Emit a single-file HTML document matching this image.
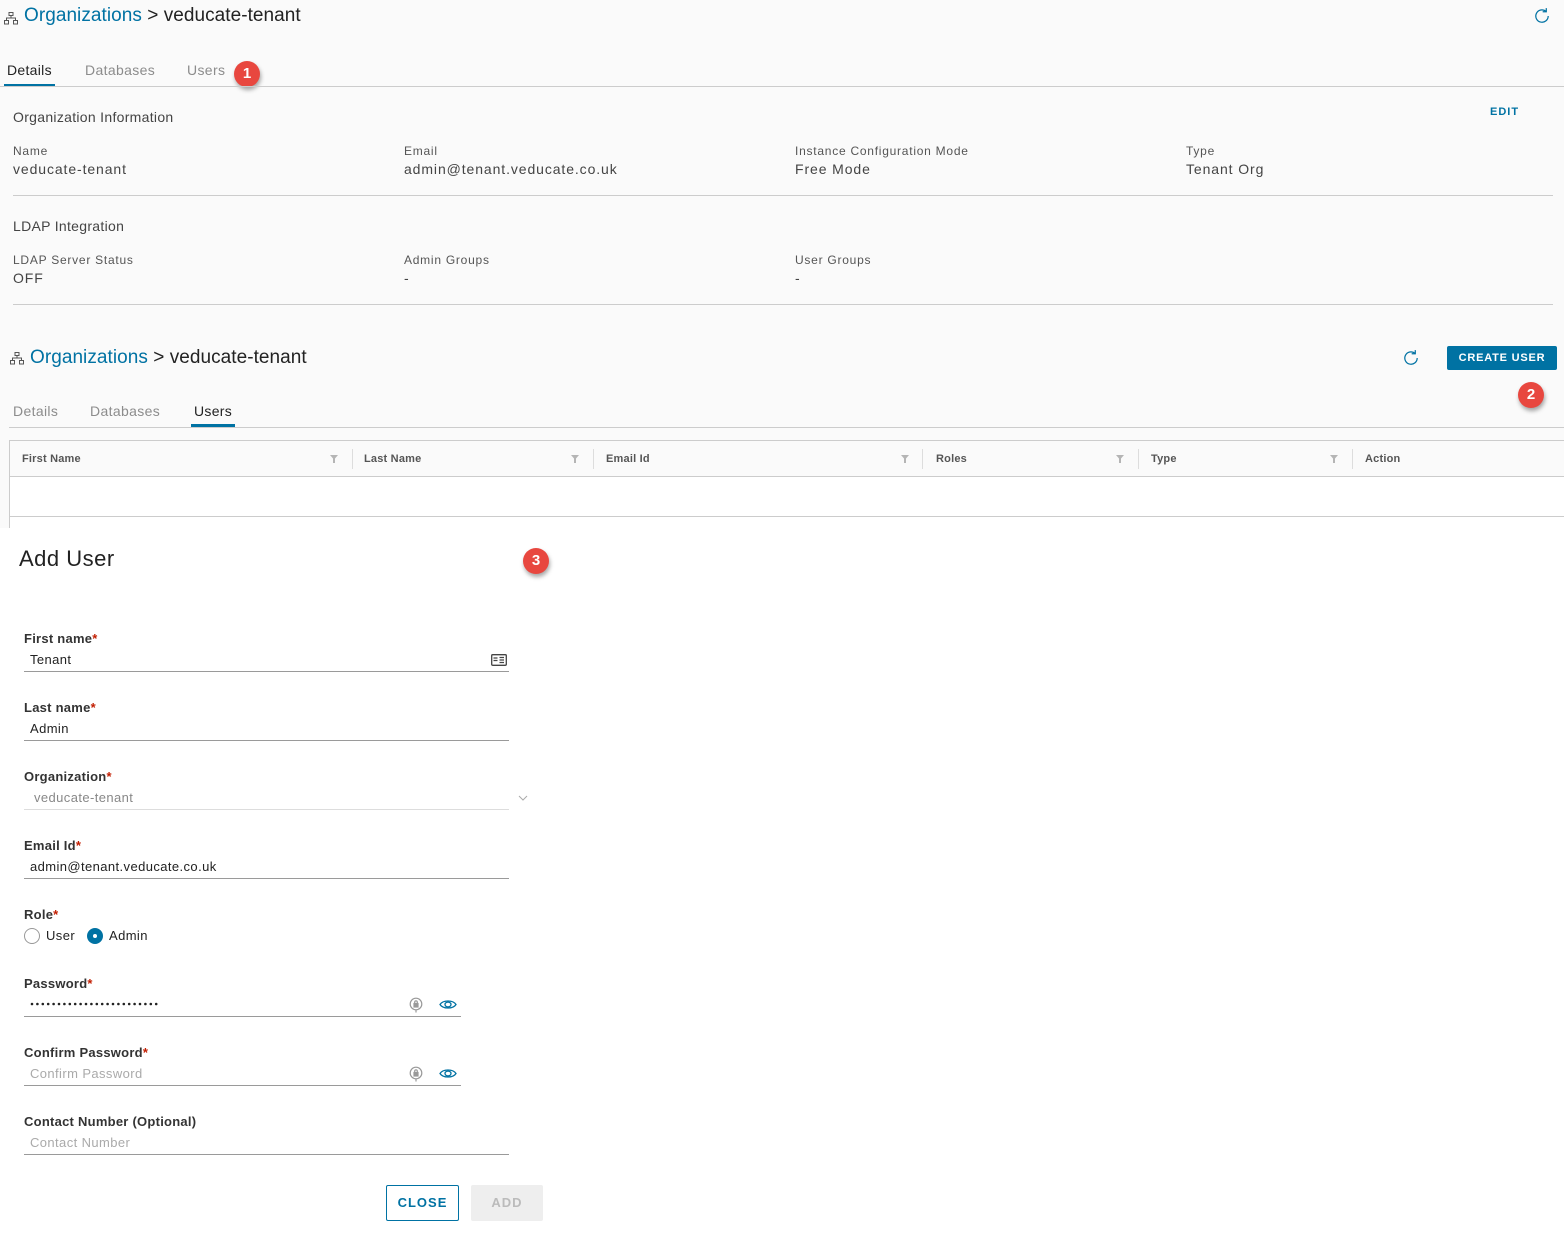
<!DOCTYPE html>
<html><head><meta charset="utf-8">
<style>
*{margin:0;padding:0;box-sizing:border-box}
body{width:1564px;height:1234px;position:relative;background:#fff;font-family:"Liberation Sans",sans-serif;color:#333;overflow:hidden}
.a{position:absolute;white-space:nowrap}
.top{position:absolute;left:0;top:0;width:1564px;height:528px;background:#fafafa}
.hl{position:absolute;height:1px;background:#ccc}
.blue{color:#0072a3}
.lbl{font-size:12px;color:#555;letter-spacing:.75px}
.val{font-size:14px;color:#444;letter-spacing:.9px}
.tab{font-size:14px;color:#8c8c8c;letter-spacing:.35px}
.th{font-size:11px;font-weight:bold;color:#555;letter-spacing:.2px}
.badge{position:absolute;width:26px;height:26px;border-radius:50%;background:#e8473f;color:#fff;font-size:15px;font-weight:bold;text-align:center;line-height:26px;box-shadow:1px 3px 4px rgba(0,0,0,.35)}
.fl{font-size:13px;font-weight:bold;color:#333;letter-spacing:.25px}
.fl i{color:#c21d00;font-style:normal}
.fv{font-size:13px;color:#222;letter-spacing:.4px}
.ph{font-size:13px;color:#aaa;letter-spacing:.4px}
.ul{position:absolute;height:1px;background:#9a9a9a}
.sep{position:absolute;width:1px;height:20px;background:#ddd;top:449px}
.filt{position:absolute;top:455px}
</style></head><body>
<div class="top"></div>

<svg class="a" style="left:4px;top:12px" width="14" height="13" viewBox="0 0 14 13" fill="none" stroke="#555" stroke-width="1"><rect x="5" y="0.5" width="4" height="3"/><rect x="0.5" y="8.5" width="4" height="3.5"/><rect x="9.5" y="8.5" width="4" height="3.5"/><path d="M7 3.5V6M2.5 8.5V6H11.5V8.5"/></svg>
<div class="a" style="left:24px;top:5px;font-size:19px;letter-spacing:.05px"><span class="blue">Organizations</span> <span style="color:#222">&gt; veducate-tenant</span></div>
<svg class="a" style="left:1533px;top:7px" width="18" height="18" viewBox="0 0 16 16" fill="none" stroke="#0072a3" stroke-width="1.1"><path d="M13.5 8A5.5 5.5 0 1 1 11.5 3.8"/><path d="M11.8 1V4.2H8.6"/></svg>

<div class="a" style="left:7px;top:62px;font-size:14px;color:#222;letter-spacing:.3px">Details</div>
<div class="a" style="left:4px;top:84px;width:51px;height:3px;background:#0072a3"></div>
<div class="a tab" style="left:85px;top:62px">Databases</div>
<div class="a tab" style="left:187px;top:62px">Users</div>
<div class="badge" style="left:234px;top:61px">1</div>
<div class="hl" style="left:0;top:86px;width:1564px"></div>

<div class="a" style="left:13px;top:109px;font-size:14px;color:#444;letter-spacing:.3px">Organization Information</div>
<div class="a blue" style="left:1490px;top:106px;font-size:11px;font-weight:bold;letter-spacing:1px">EDIT</div>

<div class="a lbl" style="left:13px;top:144px">Name</div>
<div class="a val" style="left:13px;top:161px">veducate-tenant</div>
<div class="a lbl" style="left:404px;top:144px">Email</div>
<div class="a val" style="left:404px;top:161px">admin@tenant.veducate.co.uk</div>
<div class="a lbl" style="left:795px;top:144px">Instance Configuration Mode</div>
<div class="a val" style="left:795px;top:161px">Free Mode</div>
<div class="a lbl" style="left:1186px;top:144px">Type</div>
<div class="a val" style="left:1186px;top:161px">Tenant Org</div>
<div class="hl" style="left:13px;top:195px;width:1540px"></div>

<div class="a" style="left:13px;top:218px;font-size:14px;color:#444;letter-spacing:.3px">LDAP Integration</div>
<div class="a lbl" style="left:13px;top:253px">LDAP Server Status</div>
<div class="a val" style="left:13px;top:270px">OFF</div>
<div class="a lbl" style="left:404px;top:253px">Admin Groups</div>
<div class="a val" style="left:404px;top:270px">-</div>
<div class="a lbl" style="left:795px;top:253px">User Groups</div>
<div class="a val" style="left:795px;top:270px">-</div>
<div class="hl" style="left:13px;top:304px;width:1540px"></div>

<svg class="a" style="left:10px;top:352px" width="14" height="13" viewBox="0 0 14 13" fill="none" stroke="#555" stroke-width="1"><rect x="5" y="0.5" width="4" height="3"/><rect x="0.5" y="8.5" width="4" height="3.5"/><rect x="9.5" y="8.5" width="4" height="3.5"/><path d="M7 3.5V6M2.5 8.5V6H11.5V8.5"/></svg>
<div class="a" style="left:30px;top:347px;font-size:19px;letter-spacing:.05px"><span class="blue">Organizations</span> <span style="color:#222">&gt; veducate-tenant</span></div>
<svg class="a" style="left:1402px;top:349px" width="18" height="18" viewBox="0 0 16 16" fill="none" stroke="#0072a3" stroke-width="1.1"><path d="M13.5 8A5.5 5.5 0 1 1 11.5 3.8"/><path d="M11.8 1V4.2H8.6"/></svg>
<div class="a" style="left:1447px;top:346px;width:110px;height:24px;background:#0072a3;border-radius:2px;color:#fff;font-size:11px;font-weight:bold;letter-spacing:.8px;text-align:center;line-height:24px">CREATE USER</div>
<div class="badge" style="left:1518px;top:382px">2</div>

<div class="a tab" style="left:13px;top:403px">Details</div>
<div class="a tab" style="left:90px;top:403px">Databases</div>
<div class="a" style="left:194px;top:403px;font-size:14px;color:#222;letter-spacing:.3px">Users</div>
<div class="a" style="left:191px;top:424px;width:44px;height:3px;background:#0072a3"></div>
<div class="hl" style="left:9px;top:427px;width:1555px"></div>

<div class="a" style="left:9px;top:440px;width:1560px;height:90px;border:1px solid #ccc;border-right:none;background:#fff"></div>
<div class="a" style="left:10px;top:441px;width:1554px;height:36px;background:#fafafa;border-bottom:1px solid #ccc"></div>
<div class="hl" style="left:10px;top:516px;width:1554px"></div>
<div class="a th" style="left:22px;top:453px">First Name</div>
<svg class="filt" style="left:330px" width="8" height="8" viewBox="0 0 8 8"><path d="M0 0H8L5 3.5V8H3V3.5Z" fill="#b5b5b5"/></svg><div class="sep" style="left:352px"></div>
<div class="a th" style="left:364px;top:453px">Last Name</div>
<svg class="filt" style="left:571px" width="8" height="8" viewBox="0 0 8 8"><path d="M0 0H8L5 3.5V8H3V3.5Z" fill="#b5b5b5"/></svg><div class="sep" style="left:593px"></div>
<div class="a th" style="left:606px;top:453px">Email Id</div>
<svg class="filt" style="left:901px" width="8" height="8" viewBox="0 0 8 8"><path d="M0 0H8L5 3.5V8H3V3.5Z" fill="#b5b5b5"/></svg><div class="sep" style="left:922px"></div>
<div class="a th" style="left:936px;top:453px">Roles</div>
<svg class="filt" style="left:1116px" width="8" height="8" viewBox="0 0 8 8"><path d="M0 0H8L5 3.5V8H3V3.5Z" fill="#b5b5b5"/></svg><div class="sep" style="left:1138px"></div>
<div class="a th" style="left:1151px;top:453px">Type</div>
<svg class="filt" style="left:1330px" width="8" height="8" viewBox="0 0 8 8"><path d="M0 0H8L5 3.5V8H3V3.5Z" fill="#b5b5b5"/></svg><div class="sep" style="left:1352px"></div>
<div class="a th" style="left:1365px;top:453px">Action</div>

<div class="a" style="left:0;top:528px;width:1564px;height:706px;background:#fff"></div>
<div class="a" style="left:19px;top:546px;font-size:22px;color:#222;letter-spacing:.5px">Add User</div>
<div class="badge" style="left:523px;top:548px">3</div>

<div class="a fl" style="left:24px;top:631px">First name<i>*</i></div>
<div class="a fv" style="left:30px;top:652px">Tenant</div>
<svg class="a" style="left:491px;top:654px" width="16" height="12" viewBox="0 0 16 12" fill="none" stroke="#444" stroke-width="1.3"><rect x="0.7" y="0.7" width="14.6" height="10.6" rx="1"/><path d="M2.5 4H6.5M2.5 6.5H6.5M8.5 3.5H13M8.5 6H13M8.5 8.5H13"/></svg>
<div class="ul" style="left:24px;top:671px;width:485px"></div>

<div class="a fl" style="left:24px;top:700px">Last name<i>*</i></div>
<div class="a fv" style="left:30px;top:721px">Admin</div>
<div class="ul" style="left:24px;top:740px;width:485px"></div>

<div class="a fl" style="left:24px;top:769px">Organization<i>*</i></div>
<div class="a ph" style="left:34px;top:790px;color:#888">veducate-tenant</div>
<svg class="a" style="left:518px;top:795px" width="10" height="6" viewBox="0 0 10 6" fill="none" stroke="#aaa" stroke-width="1"><path d="M1 1L5 5L9 1"/></svg>
<div class="ul" style="left:24px;top:809px;width:485px;background:#ddd"></div>

<div class="a fl" style="left:24px;top:838px">Email Id<i>*</i></div>
<div class="a fv" style="left:30px;top:859px">admin@tenant.veducate.co.uk</div>
<div class="ul" style="left:24px;top:878px;width:485px"></div>

<div class="a fl" style="left:24px;top:907px">Role<i>*</i></div>
<div class="a" style="left:24px;top:928px;width:16px;height:16px;border:1px solid #999;border-radius:50%"></div>
<div class="a fv" style="left:46px;top:928px">User</div>
<div class="a" style="left:87px;top:928px;width:16px;height:16px;background:#0072a3;border-radius:50%"></div>
<div class="a" style="left:93px;top:934px;width:4px;height:4px;background:#fff;border-radius:50%"></div>
<div class="a fv" style="left:109px;top:928px">Admin</div>

<div class="a fl" style="left:24px;top:976px">Password<i>*</i></div>
<svg class="a" style="left:30px;top:1001px" width="132" height="6" viewBox="0 0 132 6"><g fill="#222"><circle cx="2" cy="3" r="1.3"/><circle cx="7.4" cy="3" r="1.3"/><circle cx="12.8" cy="3" r="1.3"/><circle cx="18.2" cy="3" r="1.3"/><circle cx="23.6" cy="3" r="1.3"/><circle cx="29" cy="3" r="1.3"/><circle cx="34.4" cy="3" r="1.3"/><circle cx="39.8" cy="3" r="1.3"/><circle cx="45.2" cy="3" r="1.3"/><circle cx="50.6" cy="3" r="1.3"/><circle cx="56" cy="3" r="1.3"/><circle cx="61.4" cy="3" r="1.3"/><circle cx="66.8" cy="3" r="1.3"/><circle cx="72.2" cy="3" r="1.3"/><circle cx="77.6" cy="3" r="1.3"/><circle cx="83" cy="3" r="1.3"/><circle cx="88.4" cy="3" r="1.3"/><circle cx="93.8" cy="3" r="1.3"/><circle cx="99.2" cy="3" r="1.3"/><circle cx="104.6" cy="3" r="1.3"/><circle cx="110" cy="3" r="1.3"/><circle cx="115.4" cy="3" r="1.3"/><circle cx="120.8" cy="3" r="1.3"/><circle cx="126.2" cy="3" r="1.3"/></g></svg>
<svg class="a" style="left:409px;top:997px" width="14" height="16" viewBox="0 0 14 16" fill="none" stroke="#999" stroke-width="1.2"><circle cx="7" cy="7" r="5.8"/><rect x="5" y="6.5" width="4" height="3.5" fill="#999"/><path d="M5.7 6.5V5.2A1.3 1.3 0 0 1 8.3 5.2V6.5M7 13V15.5"/></svg>
<svg class="a" style="left:439px;top:999px" width="18" height="11" viewBox="0 0 18 11" fill="none" stroke="#0072a3" stroke-width="1.3"><path d="M1 5.5C4 0.8 14 0.8 17 5.5C14 10.2 4 10.2 1 5.5Z"/><ellipse cx="9" cy="5.5" rx="3" ry="2.4"/></svg>
<div class="ul" style="left:24px;top:1016px;width:437px"></div>

<div class="a fl" style="left:24px;top:1045px">Confirm Password<i>*</i></div>
<div class="a ph" style="left:30px;top:1066px">Confirm Password</div>
<svg class="a" style="left:409px;top:1066px" width="14" height="16" viewBox="0 0 14 16" fill="none" stroke="#999" stroke-width="1.2"><circle cx="7" cy="7" r="5.8"/><rect x="5" y="6.5" width="4" height="3.5" fill="#999"/><path d="M5.7 6.5V5.2A1.3 1.3 0 0 1 8.3 5.2V6.5M7 13V15.5"/></svg>
<svg class="a" style="left:439px;top:1068px" width="18" height="11" viewBox="0 0 18 11" fill="none" stroke="#0072a3" stroke-width="1.3"><path d="M1 5.5C4 0.8 14 0.8 17 5.5C14 10.2 4 10.2 1 5.5Z"/><ellipse cx="9" cy="5.5" rx="3" ry="2.4"/></svg>
<div class="ul" style="left:24px;top:1085px;width:437px"></div>

<div class="a fl" style="left:24px;top:1114px">Contact Number (Optional)</div>
<div class="a ph" style="left:30px;top:1135px">Contact Number</div>
<div class="ul" style="left:24px;top:1154px;width:485px"></div>

<div class="a" style="left:386px;top:1185px;width:73px;height:36px;border:1px solid #0072a3;border-radius:2px;color:#0072a3;font-size:13px;font-weight:bold;letter-spacing:1px;text-align:center;line-height:34px">CLOSE</div>
<div class="a" style="left:471px;top:1185px;width:72px;height:36px;background:#eee;border-radius:2px;color:#bbb;font-size:13px;font-weight:bold;letter-spacing:1px;text-align:center;line-height:36px">ADD</div>
</body></html>
